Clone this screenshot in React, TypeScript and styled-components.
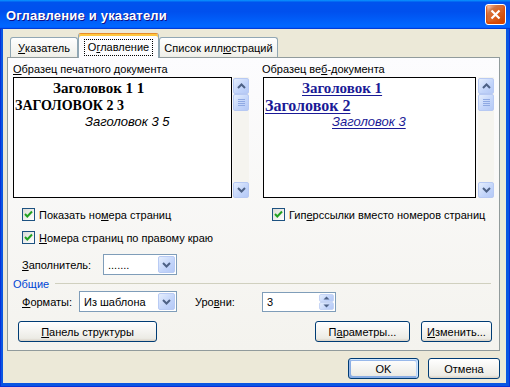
import React from 'react';
import styled, { createGlobalStyle } from 'styled-components';

const GlobalStyle = createGlobalStyle`
  html, body {
    margin: 0;
    padding: 0;
  }
  body {
    width: 510px;
    height: 387px;
    overflow: hidden;
    font-family: "Liberation Sans", Arial, sans-serif;
    font-size: 11px;
    color: #000;
  }
  u {
    text-decoration: underline;
    text-underline-offset: 1px;
  }
`;

const Chevron = ({ dir, color = '#4D6185' }: { dir: 'up' | 'down'; color?: string }) => (
  <svg width="9" height="6" viewBox="0 0 9 6">
    <path
      d={dir === 'up' ? 'M1 5 L4.5 1.5 L8 5' : 'M1 1 L4.5 4.5 L8 1'}
      stroke={color}
      strokeWidth="2"
      fill="none"
    />
  </svg>
);

const SmallArrow = ({ dir }: { dir: 'up' | 'down' }) => (
  <svg width="7" height="4" viewBox="0 0 7 4">
    <path d={dir === 'up' ? 'M0.5 3.5 L3.5 0.5 L6.5 3.5 Z' : 'M0.5 0.5 L3.5 3.5 L6.5 0.5 Z'} fill="#4D6185" />
  </svg>
);

const CheckMark = () => (
  <svg width="11" height="11" viewBox="0 0 11 11">
    <path d="M2 5 L4.3 7.5 L9 2.5" stroke="#21A121" strokeWidth="2" fill="none" />
  </svg>
);

function Checkbox({ children }: { children: React.ReactNode }) {
  return (
    <CheckRow>
      <CheckBoxSquare>
        <CheckMark />
      </CheckBoxSquare>
      <span>{children}</span>
    </CheckRow>
  );
}

function ScrollBar() {
  return (
    <ScrollTrack>
      <ScrollButton>
        <Chevron dir="up" />
      </ScrollButton>
      <ScrollThumb>
        <Grip />
        <Grip />
        <Grip />
        <Grip />
      </ScrollThumb>
      <ScrollSpace />
      <ScrollButton>
        <Chevron dir="down" />
      </ScrollButton>
    </ScrollTrack>
  );
}

function Combo({ width, value }: { width: number; value: string }) {
  return (
    <ComboBox style={{ width }}>
      <ComboValue>{value}</ComboValue>
      <ComboButton>
        <Chevron dir="down" />
      </ComboButton>
    </ComboBox>
  );
}

export default function App() {
  return (
    <>
      <GlobalStyle />
      <Window>
        <TitleBar>
          <Title>Оглавление и указатели</Title>
          <CloseButton>
            <svg width="11" height="11" viewBox="0 0 11 11">
              <path d="M1.5 1.5 L9.5 9.5 M9.5 1.5 L1.5 9.5" stroke="#fff" strokeWidth="2.2" />
            </svg>
          </CloseButton>
        </TitleBar>

        <Body>
          <TabRow>
            <Tab $width={68}>
              <u>У</u>казатель
            </Tab>
            <Tab $width={81} $active>
              <FocusLabel>
                О<u>г</u>лавление
              </FocusLabel>
            </Tab>
            <Tab $width={119}>
              Список илл<u>ю</u>страций
            </Tab>
          </TabRow>

          <TabPanel>
            <Columns>
              <Column>
                <Caption>
                  <u>О</u>бразец печатного документа
                </Caption>
                <PreviewRow>
                  <PreviewBox $width={219}>
                    <PrintLine $size={15} $indent={39} $top={1}>Заголовок 1 1</PrintLine>
                    <PrintLine $size={14} $indent={1} $top={0}>ЗАГОЛОВОК 2 3</PrintLine>
                    <ItalicLine $indent={71}>Заголовок 3 5</ItalicLine>
                  </PreviewBox>
                  <ScrollBar />
                </PreviewRow>
                <Indent>
                  <Checkbox>
                    Показать но<u>м</u>ера страниц
                  </Checkbox>
                  <Checkbox>
                    <u>Н</u>омера страниц по правому краю
                  </Checkbox>
                  <FieldRow>
                    <FieldLabel $width={81}>
                      <u>З</u>аполнитель:
                    </FieldLabel>
                    <Combo width={74} value="......." />
                  </FieldRow>
                </Indent>
              </Column>

              <Separator />

              <Column>
                <Caption>
                  Образец ве<u>б</u>-документа
                </Caption>
                <PreviewRow $gap={2}>
                  <PreviewBox $width={213} $offset={1}>
                    <WebLine $size={15} $indent={38} $top={1}>Заголовок 1</WebLine>
                    <WebLine $size={16} $indent={1} $top={0}>Заголовок 2</WebLine>
                    <ItalicLine $indent={68} $link>Заголовок 3</ItalicLine>
                  </PreviewBox>
                  <ScrollBar />
                </PreviewRow>
                <Indent $left={10}>
                  <Checkbox>
                    Гип<u>е</u>рссылки вместо номеров страниц
                  </Checkbox>
                </Indent>
              </Column>
            </Columns>

            <GroupHeader>
              <span>Общие</span>
              <GroupLine />
            </GroupHeader>

            <FieldRow $indent={9} $top={1}>
              <FieldLabel $width={57}>
                <u>Ф</u>орматы:
              </FieldLabel>
              <Combo width={98} value="Из шаблона" />
              <FieldLabel $width={67} $left={18}>
                Уро<u>в</u>ни:
              </FieldLabel>
              <SpinBox>
                <ComboValue>3</ComboValue>
                <SpinButtons>
                  <SpinHalf>
                    <SmallArrow dir="up" />
                  </SpinHalf>
                  <SpinHalf>
                    <SmallArrow dir="down" />
                  </SpinHalf>
                </SpinButtons>
              </SpinBox>
            </FieldRow>

            <PanelButtons>
              <Button $width={139}>
                <u>П</u>анель структуры
              </Button>
              <Spacer />
              <Button $width={95}>
                П<u>а</u>раметры...
              </Button>
              <Button $width={71}>
                <u>И</u>зменить...
              </Button>
            </PanelButtons>
          </TabPanel>

          <DialogButtons>
            <Button $width={71} $default>
              OK
            </Button>
            <Button $width={72}>Отмена</Button>
          </DialogButtons>
        </Body>
      </Window>
    </>
  );
}

const Window = styled.div`
  width: 510px;
  height: 387px;
  box-sizing: border-box;
  display: flex;
  flex-direction: column;
  background: #0A56E2;
  border-left: 1px solid #0831D9;
  border-right: 1px solid #0831D9;
  border-bottom: 1px solid #0831D9;
`;

const TitleBar = styled.div`
  height: 29px;
  flex-shrink: 0;
  margin: 0 -1px;
  display: flex;
  align-items: center;
  justify-content: space-between;
  padding: 0 4px 0 6px;
  background: linear-gradient(180deg, #0997ff, #0053ee 8%, #0050ee 40%, #0066ff 88%, #0066ff 93%, #005bff 95%, #003dd7 96%, #003dd7);
`;

const Title = styled.div`
  color: #fff;
  font-family: "Liberation Sans", Arial, sans-serif;
  font-weight: bold;
  font-size: 13px;
  letter-spacing: 0.2px;
  text-shadow: 1px 1px #0f1089;
  padding-top: 1px;
`;

const CloseButton = styled.div`
  width: 21px;
  height: 21px;
  box-sizing: border-box;
  border: 1px solid #fff;
  border-radius: 3px;
  display: flex;
  align-items: center;
  justify-content: center;
  background: radial-gradient(circle at 90% 90%, #cc4600 0, #dc6527 55%, #cd7546 70%, #ffccb2 90%, #fff 100%);
  box-shadow: inset 0 -1px 2px 1px #da4600;
`;

const Body = styled.div`
  flex: 1;
  margin: 0 3px 3px 2px;
  background: #ECE9D8;
  padding: 4px 6px 0 4px;
  display: flex;
  flex-direction: column;
`;

const TabRow = styled.div`
  height: 24px;
  display: flex;
  align-items: flex-end;
  padding-left: 3px;
`;

const Tab = styled.div<{ $width: number; $active?: boolean }>`
  width: ${p => p.$width}px;
  box-sizing: border-box;
  height: ${p => (p.$active ? 25 : 20)}px;
  display: flex;
  align-items: center;
  justify-content: center;
  border: 1px solid #91A7B4;
  border-bottom: none;
  border-radius: 3px 3px 0 0;
  background: linear-gradient(180deg, #fff, #fafaf9 26%, #f0f0ea 95%, #ecebe5);
  ${p =>
    p.$active &&
    `
    position: relative;
    z-index: 1;
    margin-bottom: -1px;
    border-top: 1px solid #E68B2C;
    box-shadow: inset 0 2px #FFC73C;
    background: #FCFCFE;
    padding-top: 2px;
  `}
`;

const FocusLabel = styled.span`
  outline: 1px dotted #000;
  outline-offset: 1px;
  padding: 0 2px;
  line-height: 13px;
`;

const TabPanel = styled.div`
  height: 294px;
  box-sizing: border-box;
  border: 1px solid #919B9C;
  background: linear-gradient(180deg, #FCFCFE, #F4F3EE);
  padding: 5px 4px 0 5px;
  display: flex;
  flex-direction: column;
`;

const Columns = styled.div`
  display: grid;
  grid-template-columns: 236px 1px 1fr;
  column-gap: 6px;
`;

const Column = styled.div`
  display: flex;
  flex-direction: column;
`;

const Separator = styled.div`
  margin-top: -3px;
  margin-bottom: -2px;
  margin-right: 1px;
  background: #D0D0BF;
  box-shadow: 1px 0 #fff;
`;

const Caption = styled.div`
  height: 13px;
  line-height: 13px;
`;

const PreviewRow = styled.div<{ $gap?: number }>`
  display: flex;
  gap: ${p => p.$gap ?? 1}px;
  margin-top: 1px;
  height: 121px;
`;

const PreviewBox = styled.div<{ $width: number; $offset?: number }>`
  width: ${p => p.$width}px;
  margin-left: ${p => p.$offset ?? 0}px;
  box-sizing: border-box;
  border: 1px solid #000;
  background: #fff;
  padding-top: 1px;
  display: flex;
  flex-direction: column;
`;

const PrintLine = styled.div<{ $size: number; $indent: number; $top: number }>`
  font-family: "Liberation Serif", "Times New Roman", serif;
  font-weight: bold;
  font-size: ${p => p.$size}px;
  line-height: 17px;
  padding-left: ${p => p.$indent}px;
  margin-top: ${p => p.$top}px;
  white-space: nowrap;
`;

const WebLine = styled(PrintLine)`
  color: #1A1A96;
  text-decoration: underline;
  text-underline-offset: 2px;
  align-self: flex-start;
`;

const ItalicLine = styled.div<{ $indent: number; $link?: boolean }>`
  font-family: "Liberation Sans", Arial, sans-serif;
  font-style: italic;
  font-size: 13px;
  line-height: 16px;
  padding-left: ${p => p.$indent}px;
  white-space: nowrap;
  ${p =>
    p.$link &&
    `
    color: #1A1A96;
    text-decoration: underline;
    text-underline-offset: 2px;
    align-self: flex-start;
  `}
`;

const ScrollTrack = styled.div`
  width: 16px;
  display: flex;
  flex-direction: column;
  background: #F5F4EF;
  padding-top: 1px;
`;

const ScrollButton = styled.div`
  height: 16px;
  box-sizing: border-box;
  border: 1px solid #B7C9F3;
  border-radius: 2px;
  background: linear-gradient(135deg, #E5EEFD, #C2D4FA 60%, #B5C9F6);
  display: flex;
  align-items: center;
  justify-content: center;
`;

const ScrollThumb = styled(ScrollButton)`
  height: 17px;
  flex-direction: column;
  gap: 1px;
`;

const Grip = styled.div`
  width: 7px;
  height: 1px;
  background: #8FA9E3;
`;

const ScrollSpace = styled.div`
  flex: 1;
`;

const Indent = styled.div<{ $left?: number }>`
  padding-left: ${p => p.$left ?? 9}px;
  display: flex;
  flex-direction: column;
  padding-top: 8px;
  gap: 6px;
`;

const CheckRow = styled.div`
  height: 17px;
  display: flex;
  align-items: center;
  gap: 4px;
  white-space: nowrap;
`;

const CheckBoxSquare = styled.div`
  width: 13px;
  height: 13px;
  box-sizing: border-box;
  border: 1px solid #1D5281;
  background: linear-gradient(135deg, #DCDCD7, #fff);
  display: flex;
  align-items: center;
  justify-content: center;
`;

const FieldRow = styled.div<{ $indent?: number; $top?: number }>`
  display: flex;
  align-items: center;
  height: 21px;
  padding-left: ${p => p.$indent ?? 0}px;
  margin-top: ${p => p.$top ?? 2}px;
`;

const FieldLabel = styled.div<{ $width: number; $left?: number }>`
  width: ${p => p.$width}px;
  margin-left: ${p => p.$left ?? 0}px;
  flex-shrink: 0;
`;

const ComboBox = styled.div`
  height: 21px;
  box-sizing: border-box;
  border: 1px solid #7F9DB9;
  background: #fff;
  display: flex;
  align-items: center;
  padding: 1px;
`;

const ComboValue = styled.div`
  flex: 1;
  padding-left: 3px;
  white-space: nowrap;
`;

const ComboButton = styled(ScrollButton)`
  width: 17px;
  height: 17px;
  border-color: #B9CBF4;
`;

const SpinBox = styled(ComboBox)`
  width: 74px;
  height: 20px;
`;

const SpinButtons = styled.div`
  width: 15px;
  height: 16px;
  display: flex;
  flex-direction: column;
`;

const SpinHalf = styled(ScrollButton)`
  height: 8px;
  border-color: #C6D5F5;
`;

const GroupHeader = styled.div`
  display: flex;
  align-items: center;
  gap: 6px;
  height: 13px;
  margin-top: 2px;
  color: #0046D5;
`;

const GroupLine = styled.div`
  flex: 1;
  height: 1px;
  background: #D0D0BF;
  margin-right: 4px;
`;

const PanelButtons = styled.div`
  display: flex;
  align-items: center;
  gap: 11px;
  margin-top: 9px;
  padding: 0 3px 0 5px;
`;

const Spacer = styled.div`
  flex: 1;
  margin-left: -11px;
`;

const Button = styled.div<{ $width: number; $default?: boolean }>`
  width: ${p => p.$width}px;
  height: 21px;
  box-sizing: border-box;
  border: 1px solid #003C74;
  border-radius: 3px;
  background: linear-gradient(180deg, #fff, #ecebe5 86%, #d8d0c4);
  display: flex;
  align-items: center;
  justify-content: center;
  white-space: nowrap;
  ${p =>
    p.$default &&
    `
    box-shadow: inset -1px 1px #cee7ff, inset 1px 2px #98b8ea, inset -2px 2px #bcd4f6, inset 1px -1px #89ade4, inset 2px -2px #89ade4;
  `}
`;

const DialogButtons = styled.div`
  display: flex;
  justify-content: flex-end;
  gap: 9px;
  margin-top: 7px;
`;
